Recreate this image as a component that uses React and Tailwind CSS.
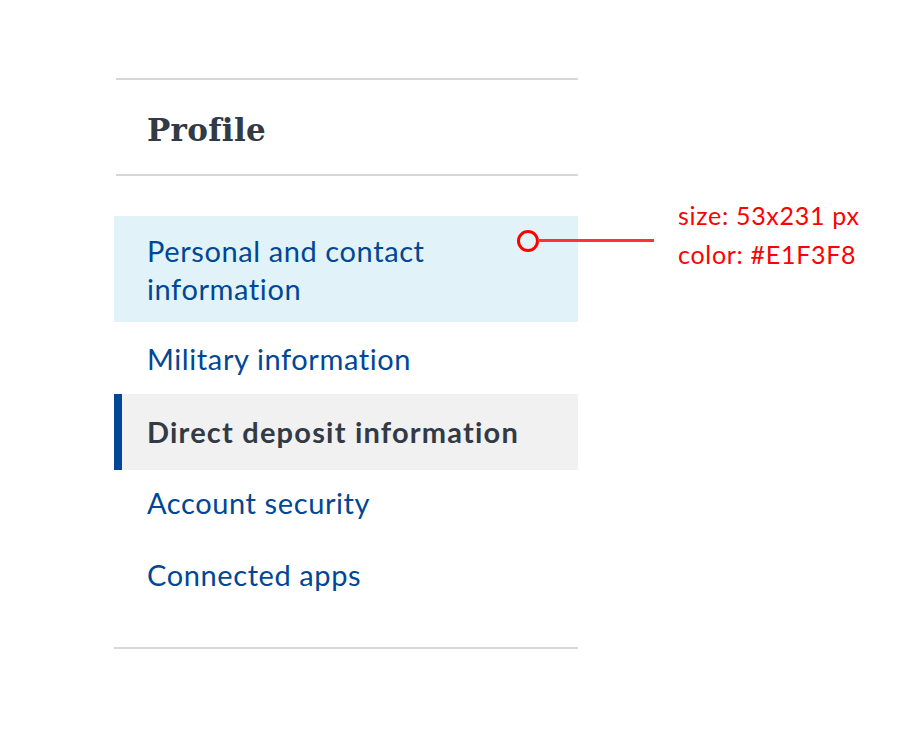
import React from "react";

const sans = { fontFamily: "Lato, 'Noto Sans', sans-serif" };

export default function App() {
  return (
    <div className="relative w-[898px] h-[750px] bg-white" style={sans}>
      <div className="pt-[78px] pl-[114px]">
        <nav className="w-[464px]">
          <div className="ml-[2px] border-t-2 border-b-2 border-[#d6d7d9] h-[98px] flex items-center pl-[31px]">
            <h2
              className="text-[31px] font-bold text-[#323a45] leading-none mt-[6px] tracking-[0.3px]"
              style={{ fontFamily: "'DejaVu Serif', serif" }}
            >
              Profile
            </h2>
          </div>
          <ul className="mt-[40px] border-b-2 border-[#d6d7d9] pb-[34px] text-[29px] leading-[38px]">
            <li className="bg-[#e1f3f8] pl-[33px] pr-[40px] pt-[16px] pb-[14px] text-[#004795] tracking-[0.6px]">
              Personal and contact
              <br />
              information
            </li>
            <li className="pl-[33px] pt-[18px] pb-[16px] text-[#004795] tracking-[0.6px]">
              Military information
            </li>
            <li className="bg-[#f1f1f1] border-l-[8px] border-[#004795] pl-[25px] py-[19px] font-bold text-[#323a45] tracking-[1.2px]">
              Direct deposit information
            </li>
            <li className="pl-[33px] pt-[14px] pb-[19px] text-[#004795] tracking-[0.6px]">
              Account security
            </li>
            <li className="pl-[33px] pt-[15px] pb-[19px] text-[#004795] tracking-[0.6px]">
              Connected apps
            </li>
          </ul>
        </nav>
      </div>

      {/* annotation overlay */}
      <div className="absolute left-[517px] top-[230px] w-[22px] h-[22px] rounded-full border-[3px] border-[#ff0000] bg-transparent" />
      <div className="absolute left-[538px] top-[239px] w-[116px] h-[3px] bg-[#ff3333]" />
      <div className="absolute left-[678px] top-[196px] text-[25px] leading-[39px] text-[#ff0000] tracking-[0.7px]">
        <div>size: 53x231 px</div>
        <div>color: #E1F3F8</div>
      </div>
    </div>
  );
}
